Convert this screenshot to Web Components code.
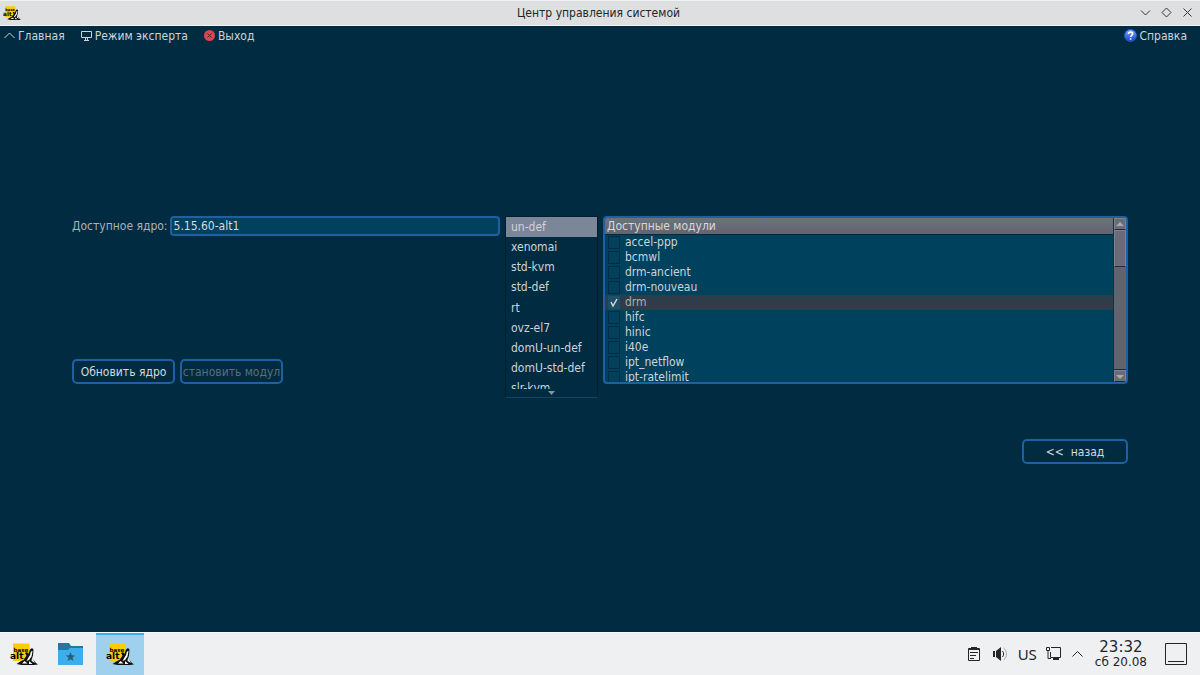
<!DOCTYPE html>
<html lang="ru">
<head>
<meta charset="utf-8">
<title>Центр управления системой</title>
<style>
html, body { margin: 0; height: 100%; }
body { font: 12px/15px "DejaVu Sans Condensed", "DejaVu Sans", sans-serif; color: #cfd3d8; background: #012b40; }
</style>
</head>
<body>
<control-center></control-center>
<script>
function define(name, html, setup) {
  const template = document.createElement('template');
  template.innerHTML = html;
  customElements.define(name, class extends HTMLElement {
    connectedCallback() {
      if (this.shadowRoot) return;
      this.attachShadow({ mode: 'open' }).append(template.content.cloneNode(true));
      if (setup) setup(this, this.shadowRoot);
    }
  });
}

define('alt-logo', `
<style>:host { display: block; } svg { display: block; width: 100%; height: 100%; }</style>
<svg viewBox="0 0 56 44" aria-hidden="true">
  <path d="M6 1h33v35H6z" fill="#fc0"/>
  <text x="7" y="17" font-family="DejaVu Sans, sans-serif" font-weight="bold" font-size="11">base</text>
  <text x="0" y="32" font-family="DejaVu Sans, sans-serif" font-weight="bold" font-size="18">alt</text>
  <path d="M30 20l4-2 6 8-4 4z" fill="#111"/>
  <path d="M40 13l4-3 3 3-1 12-2 6 8 9 4 3-9 1-24 0-10-2 9-6 5-2 4-6 6-7z" fill="#111"/>
  <path d="M42 17l3-1-2 11-5 7-5 2 4-7 3-5zM44 30l6 10-7-4zM29 36l6 5-11 0zM38 36l7 6-7 0z" fill="#fff"/>
</svg>`);

define('title-bar', `
<style>
:host { display: grid; grid-template-columns: 1fr auto 1fr; align-items: center; height: 26px; box-sizing: border-box;
  background: #dedfe1; color: #232629; border-top: 1px solid #f1f2f3; border-bottom: 1px solid #f1f2f3; padding: 0 6px 0 3px; }
alt-logo { width: 18px; height: 14px; }
nav { display: flex; gap: 9px; justify-content: flex-end; }
button { border: 0; padding: 0; background: none; width: 12px; height: 12px; }
svg { display: block; fill: none; stroke: #30353a; }
h1 { margin: 0; font: inherit; }
</style>
<alt-logo></alt-logo>
<h1><slot></slot></h1>
<nav>
  <button aria-label="Свернуть"><svg width="12" height="12"><path d="M1 3.500L5.500 8L10 3.500"/></svg></button>
  <button aria-label="Развернуть"><svg width="12" height="12"><path d="M5.500 1L10 5.500L5.500 10L1 5.500z"/></svg></button>
  <button aria-label="Закрыть"><svg width="12" height="12"><path d="M1.500 1.500l8 8M9.500 1.500l-8 8"/></svg></button>
</nav>`);

define('menu-strip', `
<style>
:host { display: flex; height: 20px; align-items: center; padding: 0 13px 0 4px; gap: 16px; }
a { color: inherit; text-decoration: none; display: flex; align-items: center; gap: 3px; }
a:last-child { margin-left: auto; gap: 2px; }
svg { display: block; }
</style>
<a href="#home"><svg width="11" height="12" fill="none" stroke="#cfd3d8"><path d="M.5 8L5.500 3L10.500 8"/></svg>Главная</a>
<a href="#expert"><svg width="11" height="12" fill="none" stroke="#cfd3d8"><path d="M.5 1.500h10v6H.5zM3 10.500h5M4.500 8v2M6.500 8v2"/></svg>Режим эксперта</a>
<a href="#exit"><svg width="11" height="12"><circle cx="5.500" cy="5.500" r="5.500" fill="#da4453"/><path d="M3.500 3.500l4 4M7.500 3.500l-4 4" stroke="#5c1a26"/></svg>Выход</a>
<a href="#help"><svg width="13" height="14"><defs><linearGradient id="g" x2="0" y2="1"><stop stop-color="#7fa8f4"/><stop offset="1" stop-color="#1742c4"/></linearGradient></defs><circle cx="6.500" cy="6.500" r="6" fill="url(#g)" stroke="#2456cf"/><path d="M4.500 5C4.500 2.500 8.800 2.500 8.700 4.800C8.600 6.300 6.600 6.300 6.600 8.100M6.600 9.200v1.600" fill="none" stroke="#fff" stroke-width="1.600"/></svg>Справка</a>`);

define('alt-button', `
<style>
:host { display: block; }
button { display: block; width: 100%; height: 25px; padding: 1px 0 0; box-sizing: border-box; border: 2px solid #1d60a4; border-radius: 5px;
  background: #012b40; color: #d6dade; font: inherit; white-space: pre; overflow: hidden; }
button:disabled { color: #5d6c7b; }
</style>
<button><slot></slot></button>`, (host, root) => {
  root.querySelector('button').disabled = host.hasAttribute('disabled');
});

define('kernel-field', `
<style>
:host { display: flex; align-items: center; gap: 2px; height: 20px; }
label { color: #a9b3bd; }
input { flex: 1; min-width: 0; height: 20px; box-sizing: border-box; margin: 0; padding: 0 2px; border: 2px solid #1d60a4; border-radius: 4px;
  background: #00415e; color: #d6dade; font: inherit; }
</style>
<label for="kernel">Доступное ядро:</label><input id="kernel" value="5.15.60-alt1" readonly>`);

define('flavour-list', `
<style>
:host { display: block; box-sizing: border-box; height: 182px; border: 1px solid #021f30; border-bottom-color: #0b4867; }
ul { list-style: none; margin: 0; padding: 0; display: grid; grid-template-rows: repeat(8, 1fr) 10px; height: 172px; }
li { display: flex; align-items: center; padding-left: 5px; overflow: hidden; white-space: nowrap; }
li:first-child { background: #7b8699; }
li:last-child { align-items: flex-start; padding-top: 2px; }
svg { display: block; margin: 1px auto 0; }
</style>
<ul role="listbox" aria-label="Варианты ядра"></ul>
<svg width="8" height="6"><path d="M0 1h7L3.500 5z" fill="#8795a2"/></svg>`, (host, root) => {
  const names = ['un-def', 'xenomai', 'std-kvm', 'std-def', 'rt', 'ovz-el7', 'domU-un-def', 'domU-std-def', 'slr-kvm'];
  root.querySelector('ul').innerHTML = names.map((n, i) => `<li role="option" aria-selected="${i === 0}">${n}</li>`).join('');
});

define('module-row', `
<style>
:host { display: block; height: 15px; }
:host([checked]) { background: #2f3d4b; color: #a7afb8; }
label { display: flex; align-items: center; height: 15px; gap: 5px; padding-left: 3px; }
input { appearance: none; margin: 0; width: 12px; height: 13px; box-sizing: border-box; border: 1px solid #022c42; background: #02405c; }
input:checked { border-color: #1e4e69; background: #1e4e69 url("data:image/svg+xml,%3Csvg xmlns='http://www.w3.org/2000/svg' width='10' height='11'%3E%3Cpath d='M2 5l2 4l4-7' fill='none' stroke='%23d6dade' stroke-width='1.500'/%3E%3C/svg%3E"); }
</style>
<label><input type="checkbox"><slot></slot></label>`, (host, root) => {
  root.querySelector('input').checked = host.hasAttribute('checked');
});

define('module-list', `
<style>
:host { display: grid; grid-template-columns: 1fr 13px; box-sizing: border-box; height: 168px; border: 2px solid #1d60a4; border-radius: 4px; background: #00415e; overflow: hidden; }
.list { min-width: 0; overflow: hidden; }
h2 { margin: 0; height: 17px; box-sizing: border-box; padding-left: 2px; font: inherit; line-height: 17px; background: linear-gradient(#6e717a, #62656f); border-bottom: 1px solid #02293c; color: #d6dade; }
.bar { display: grid; grid-template-rows: 12px 37px 1fr 12px; background: #60646f; border-left: 1px solid #17303f; }
.bar > * { box-sizing: border-box; border: 1px solid #7e828b; border-bottom-color: #17303f; background: #696c76; }
.bar .track { border: 0; background: #60646f; border-bottom: 1px solid #17303f; }
svg { display: block; width: 100%; height: 100%; box-sizing: border-box; }
</style>
<div class="list"><h2>Доступные модули</h2><div class="rows"></div></div>
<div class="bar"><svg viewBox="0 0 10 10"><path d="M1 7L5 3l4 4z" fill="#a6aab0"/></svg><span></span><span class="track"></span><svg viewBox="0 0 10 10"><path d="M1 4l4 4l4-4z" fill="#a6aab0"/></svg></div>`, (host, root) => {
  const names = ['accel-ppp', 'bcmwl', 'drm-ancient', 'drm-nouveau', 'drm', 'hifc', 'hinic', 'i40e', 'ipt_netflow', 'ipt-ratelimit'];
  root.querySelector('.rows').innerHTML = names.map(n => `<module-row${n === 'drm' ? ' checked' : ''}>${n}</module-row>`).join('');
});

define('kernel-page', `
<style>
:host { flex: 1; display: flex; flex-direction: column; justify-content: center; gap: 41px; padding: 2px 6% 0; }
.main { display: grid; grid-template-columns: 428fr 93px 525fr; column-gap: 5px; align-items: start; }
.left { display: flex; flex-direction: column; justify-content: space-between; height: 168px; }
.buttons { display: flex; gap: 5px; }
.buttons alt-button { width: 103px; }
.back { width: 106px; align-self: flex-end; }
</style>
<div class="main">
  <div class="left"><kernel-field></kernel-field><div class="buttons"><alt-button>Обновить ядро</alt-button><alt-button disabled>становить модул</alt-button></div></div>
  <flavour-list></flavour-list>
  <module-list></module-list>
</div>
<alt-button class="back">&lt;&lt;  назад</alt-button>`);

define('task-bar', `
<style>
:host { display: flex; align-items: center; height: 43px; box-sizing: border-box; border-top: 1px solid #fafbfb; background: #eff0f1; color: #232629; padding-right: 13px; }
.task { width: 48px; height: 42px; border: 0; padding: 0; background: none; display: grid; place-items: center; box-sizing: border-box; }
.active { background: #9fd1ee; border-top: 2px solid #3daee9; padding-bottom: 2px; }
alt-logo { width: 28px; height: 22px; }
.tray { margin-left: auto; display: flex; align-items: center; gap: 11px; }
svg { display: block; }
.lang { font: 15px/18px "Noto Sans", sans-serif; }
time { text-align: center; font: 12px/14px "DejaVu Sans", sans-serif; margin-right: 7px; }
b { display: block; font: 15px/15px "DejaVu Sans", sans-serif; }
.desk { border: 0; padding: 0; background: none; }
</style>
<button class="task" aria-label="Меню"><alt-logo></alt-logo></button>
<button class="task" aria-label="Файлы"><svg width="30" height="24"><path d="M1 1h11l2 3h12v9H1z" fill="#22789f"/><path d="M1 8h10l2-2h13v17H1z" fill="#3daee9"/><path d="M13.500 10l1.300 3.200 3.400.2-2.600 2.200.8 3.400-2.900-1.800-2.900 1.800.8-3.400-2.600-2.200 3.400-.2z" fill="#25607f"/></svg></button>
<button class="task active" aria-label="Центр управления"><alt-logo></alt-logo></button>
<div class="tray">
  <svg width="14" height="16" fill="none" stroke="#232629"><path d="M1.500 2.500h11v12h-11z"/><path d="M4 1h6v3H4zM2 2h10v2H2z" fill="#232629" stroke="none"/><path d="M3 6.500h8M3 9.500h6M3 12.500h4"/></svg>
  <svg width="15" height="16" fill="none" stroke="#232629"><path d="M1 5h2v6H1zM4 5l5-4v14l-5-4z" fill="#232629" stroke="none"/><path d="M10.500 5C12 7 12 9 10.500 11"/><path d="M11.500 2C15.500 5 15.500 11 11.500 14" stroke="#a5a8aa"/></svg>
  <span class="lang">US</span>
  <svg width="13" height="16" fill="none" stroke="#232629" overflow="visible"><path d="M-1.500 1.500h3v3h-3zM0 5v7.500h3M3 1.500h9.500v10H2.500V6"/><path d="M5 12h6v2H5z" fill="#232629" stroke="none"/></svg>
  <svg width="12" height="12" fill="none" stroke="#232629"><path d="M.5 8.500L5.500 3.500L10.500 8.500"/></svg>
  <time><b>23:32</b>сб 20.08</time>
  <button class="desk" aria-label="Показать рабочий стол"><svg width="22" height="22" fill="none" stroke="#232629"><path d="M.5 .5h21v21H.5zM3 18.500h16"/></svg></button>
</div>`);

define('control-center', `
<style>:host { display: flex; flex-direction: column; min-height: 100vh; }</style>
<title-bar>Центр управления системой</title-bar>
<menu-strip></menu-strip>
<kernel-page></kernel-page>
<task-bar></task-bar>`);
</script>
</body>
</html>
